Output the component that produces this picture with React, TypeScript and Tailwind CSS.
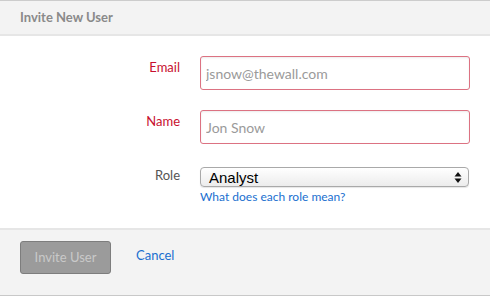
export default function App() {
  return (
    <div className="w-[490px] h-[296px] bg-white flex flex-col font-['Lato',sans-serif]">
      <div className="h-[36px] bg-[#f3f3f3] border-t border-t-[#cccccc] border-b-2 border-b-[#e6e6e6] flex items-center px-5 shrink-0">
        <h2 className="text-[13px] font-bold text-[#8a8a8a]">Invite New User</h2>
      </div>

      <div className="flex-1 flex flex-col pt-[20px]">
        <div className="flex items-center h-[34px]">
          <label className="w-[180px] text-right text-[13px] text-[#c8102e] -mt-[10px]">Email</label>
          <input
            className="ml-[20px] w-[270px] h-[34px] rounded-[3px] border border-[#dc7282] px-[5px] text-[14px] placeholder:text-[#9a9a9a] outline-none shadow-[inset_0_1px_2px_rgba(0,0,0,0.08)]"
            placeholder="jsnow@thewall.com"
          />
        </div>
        <div className="flex items-center h-[34px] mt-[20px]">
          <label className="w-[180px] text-right text-[13px] text-[#c8102e] -mt-[10px]">Name</label>
          <input
            className="ml-[20px] w-[270px] h-[34px] rounded-[3px] border border-[#dc7282] px-[5px] text-[14px] placeholder:text-[#9a9a9a] outline-none shadow-[inset_0_1px_2px_rgba(0,0,0,0.08)]"
            placeholder="Jon Snow"
          />
        </div>
        <div className="flex mt-[23px]">
          <label className="w-[180px] text-right text-[13px] text-[#555555] -mt-[1px]">Role</label>
          <div className="ml-[20px] flex flex-col">
            <div className="w-[269px] h-[20px] rounded-[4px] border border-[#a9a9a9] bg-gradient-to-b from-white to-[#ececec] flex items-center justify-between pl-[8px] pr-[6px] shadow-[0_1px_1px_rgba(0,0,0,0.1)]">
              <span className="text-[15px] text-black font-['Liberation_Sans',sans-serif] leading-none">Analyst</span>
              <svg width="8" height="13" viewBox="0 0 8 13">
                <path d="M4 1 L7.5 5.5 L0.5 5.5 Z" fill="#111" />
                <path d="M4 12 L7.5 7.5 L0.5 7.5 Z" fill="#111" />
              </svg>
            </div>
            <a className="text-[12px] text-[#1a6fcf] mt-[1px]" href="#">What does each role mean?</a>
          </div>
        </div>
      </div>

      <div className="h-[68px] bg-[#f3f3f3] border-t-2 border-t-[#e6e6e6] border-b border-b-[#c8c8c8] flex items-center px-5 gap-[25px] shrink-0">
        <button className="w-[91px] h-[33px] rounded-[3px] bg-[#9b9b9b] border border-[#7d7d7d] text-[13px] text-[#c9c9c9] -mt-[10px]">
          Invite User
        </button>
        <a className="text-[13px] text-[#1a6fcf] -mt-[14px]" href="#">Cancel</a>
      </div>
    </div>
  )
}
